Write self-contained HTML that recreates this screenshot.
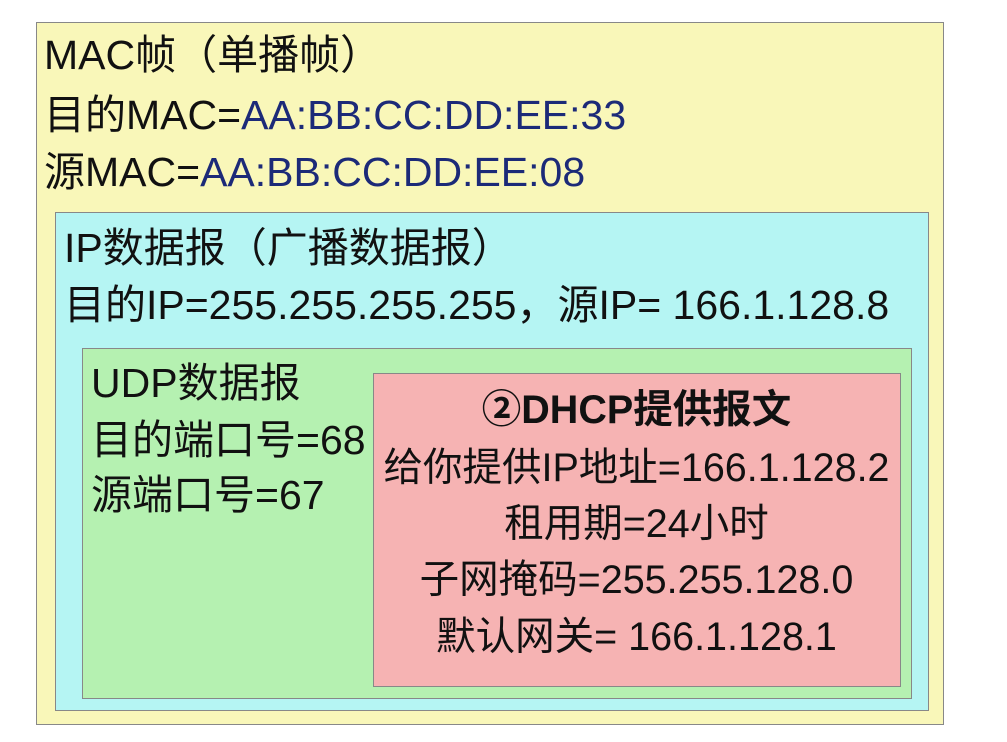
<!DOCTYPE html>
<html><head><meta charset="utf-8"><style>
body{margin:0;width:1007px;height:742px;background:#fff;position:relative;overflow:hidden;font-family:"Liberation Sans","Noto Sans CJK SC",sans-serif;color:#111}
.b{position:absolute;box-sizing:border-box;border:1.5px solid #888}
.t{position:absolute;font-size:41px;line-height:40px;white-space:nowrap}
.c{color:#1c2a78}
.p{left:373px;width:527px;text-align:center;font-size:39.5px}
</style></head><body>
<div class="b" style="left:36px;top:22px;width:908px;height:703px;background:#f9f7b9"></div>
<div class="b" style="left:55px;top:212px;width:874px;height:499px;background:#b5f5f3"></div>
<div class="b" style="left:82px;top:348px;width:830px;height:351px;background:#b5f1b1"></div>
<div class="b" style="left:373px;top:373px;width:528px;height:314px;background:#f6b3b3"></div>
<div class="t" style="left:44px;top:35px">MAC帧（单播帧）</div>
<div class="t" style="left:44px;top:95px">目的MAC=<span class="c">AA:BB:CC:DD:EE:33</span></div>
<div class="t" style="left:44px;top:152px">源MAC=<span class="c">AA:BB:CC:DD:EE:08</span></div>
<div class="t" style="left:64px;top:228px">IP数据报（广播数据报）</div>
<div class="t" style="left:64px;top:285px">目的IP=255.255.255.255，源IP= 166.1.128.8</div>
<div class="t" style="left:91px;top:363px">UDP数据报</div>
<div class="t" style="left:91px;top:420px">目的端口号=68</div>
<div class="t" style="left:91px;top:475px">源端口号=67</div>
<div class="t p" style="top:390px;font-weight:bold">②DHCP提供报文</div>
<div class="t p" style="top:448px">给你提供IP地址=166.1.128.2</div>
<div class="t p" style="top:504px">租用期=24小时</div>
<div class="t p" style="top:560px">子网掩码=255.255.128.0</div>
<div class="t p" style="top:617px">默认网关= 166.1.128.1</div>
</body></html>
